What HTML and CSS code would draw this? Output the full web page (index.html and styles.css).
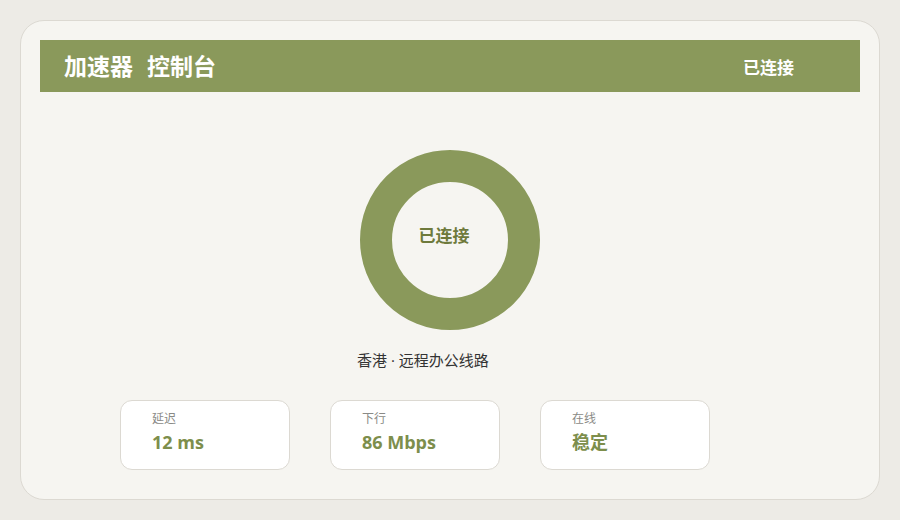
FILE: index.html
```html
<!DOCTYPE html>
<html lang="zh">
<head>
<meta charset="utf-8">
<title>加速器 控制台</title>
<link rel="stylesheet" href="styles.css">
</head>
<body>
<div class="panel">
  <header class="bar">
    <h1 class="title"><span>加速器</span><span>控制台</span></h1>
    <div class="status">已连接</div>
  </header>
  <main class="content">
    <div class="ring"><span class="ring-text">已连接</span></div>
    <p class="route">香港 · 远程办公线路</p>
    <div class="stats">
      <div class="stat"><div class="label">延迟</div><div class="value">12 ms</div></div>
      <div class="stat"><div class="label">下行</div><div class="value">86 Mbps</div></div>
      <div class="stat"><div class="label">在线</div><div class="value">稳定</div></div>
    </div>
  </main>
</div>
</body>
</html>
```
FILE: styles.css
```css
* { box-sizing: border-box; }
html, body { margin: 0; padding: 0; }
body {
  background: #edebe6;
  font-family: "Open Sans", "Noto Sans CJK SC", sans-serif;
  width: 900px;
  height: 520px;
  padding: 20px;
}
.panel {
  width: 860px;
  height: 480px;
  background: #f6f5f1;
  border: 1px solid #dcd9d2;
  border-radius: 24px;
  padding: 19px;
}
.bar {
  height: 52px;
  background: #8a995b;
  display: flex;
  align-items: center;
  justify-content: space-between;
  padding: 0 66px 0 24px;
  color: #fff;
}
.title {
  margin: 0;
  font-size: 23px;
  font-weight: 700;
  display: flex;
  gap: 14px;
  line-height: 1;
}
.status {
  font-size: 17px;
  font-weight: 700;
}
.content {
  display: flex;
  flex-direction: column;
}
.ring {
  margin: 58px auto 0;
  width: 180px;
  height: 180px;
  border-radius: 50%;
  border: 32px solid #8a995b;
  display: flex;
  align-items: center;
  justify-content: center;
}
.ring-text {
  color: #6e7a3c;
  font-size: 17px;
  font-weight: 700;
  margin: 0 12px 12px 0;
}
.route {
  margin: 20px 0 0 317px;
  font-size: 15px;
  line-height: 20px;
  color: #333;
}
.stats {
  display: flex;
  gap: 40px;
  margin: 30px 0 0 80px;
}
.stat {
  width: 170px;
  height: 70px;
  background: #fff;
  border: 1px solid #dcd9d2;
  border-radius: 12px;
  padding: 9px 0 0 31px;
}
.label {
  font-size: 12px;
  line-height: 17px;
  color: #8a8a86;
}
.value {
  margin-top: 4px;
  font-size: 18px;
  line-height: 22px;
  font-weight: 700;
  color: #7d8e4c;
}
```
